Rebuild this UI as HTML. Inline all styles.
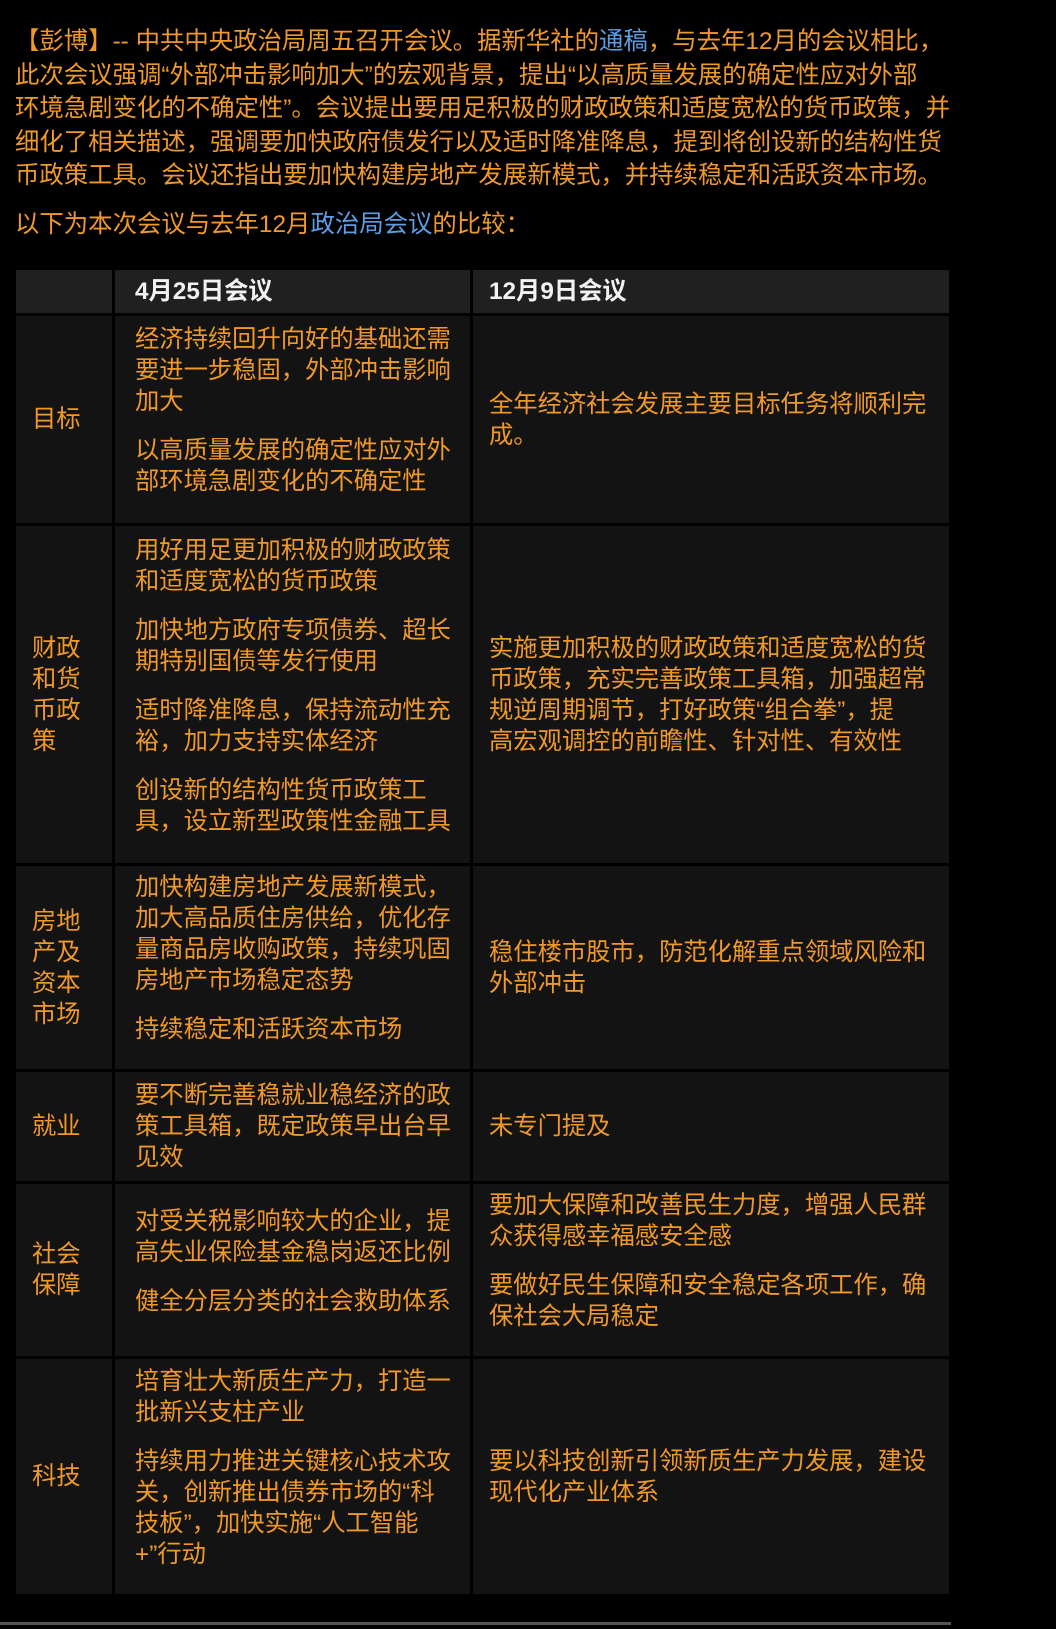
<!DOCTYPE html>
<html><head><meta charset="utf-8"><style>
html,body{margin:0;padding:0;background:#000;}
body{width:1056px;height:1629px;overflow:hidden;position:relative;font-family:"Liberation Sans","Noto Sans CJK SC",sans-serif;color:#f0992a;}
.intro{position:absolute;left:15px;top:25px;width:1000px;font-size:24.4px;line-height:33.5px;margin:0;white-space:nowrap;}
.intro2{position:absolute;left:15px;top:208px;font-size:24.4px;line-height:33.5px;margin:0;}
a{color:#5c9de4;text-decoration:none;}
table{position:absolute;left:13px;top:267px;border-collapse:separate;border-spacing:3px;background:#000;}
td,th{background:#131313;vertical-align:middle;font-size:24.3px;line-height:31px;text-align:left;font-weight:normal;white-space:nowrap;}
th{background:#202020;color:#f2f2f2;font-weight:bold;height:43px;padding:0;}
td p{margin:0 0 18px;}
.c1{width:50px;padding:0 30px 0 16px;}
.c2{width:322px;padding:0 13px 0 20px;}
.c3{width:440px;padding:0 20px 0 16px;}
.line{position:absolute;left:0;top:1622px;width:951px;height:3px;background:#555;}
</style></head><body>
<p class="intro">【彭博】-- 中共中央政治局周五召开会议。据新华社的<a>通稿</a>，与去年12月的会议相比，<br>此次会议强调“外部冲击影响加大”的宏观背景，提出“以高质量发展的确定性应对外部<br>环境急剧变化的不确定性”。会议提出要用足积极的财政政策和适度宽松的货币政策，并<br>细化了相关描述，强调要加快政府债发行以及适时降准降息，提到将创设新的结构性货<br>币政策工具。会议还指出要加快构建房地产发展新模式，并持续稳定和活跃资本市场。</p>
<p class="intro2">以下为本次会议与去年12月<a>政治局会议</a>的比较：</p>
<table>
<tr><th class="c1"></th><th class="c2">4月25日会议</th><th class="c3">12月9日会议</th></tr>
<tr style="height:207px"><td class="c1">目标</td><td class="c2"><p>经济持续回升向好的基础还需<br>要进一步稳固，外部冲击影响<br>加大</p><p>以高质量发展的确定性应对外<br>部环境急剧变化的不确定性</p></td><td class="c3">全年经济社会发展主要目标任务将顺利完<br>成。</td></tr>
<tr style="height:337px"><td class="c1">财政<br>和货<br>币政<br>策</td><td class="c2"><p>用好用足更加积极的财政政策<br>和适度宽松的货币政策</p><p>加快地方政府专项债券、超长<br>期特别国债等发行使用</p><p>适时降准降息，保持流动性充<br>裕，加力支持实体经济</p><p>创设新的结构性货币政策工<br>具，设立新型政策性金融工具</p></td><td class="c3">实施更加积极的财政政策和适度宽松的货<br>币政策，充实完善政策工具箱，加强超常<br>规逆周期调节，打好政策“组合拳”，提<br>高宏观调控的前瞻性、针对性、有效性</td></tr>
<tr style="height:203px"><td class="c1">房地<br>产及<br>资本<br>市场</td><td class="c2"><p>加快构建房地产发展新模式，<br>加大高品质住房供给，优化存<br>量商品房收购政策，持续巩固<br>房地产市场稳定态势</p><p>持续稳定和活跃资本市场</p></td><td class="c3">稳住楼市股市，防范化解重点领域风险和<br>外部冲击</td></tr>
<tr style="height:109px"><td class="c1">就业</td><td class="c2">要不断完善稳就业稳经济的政<br>策工具箱，既定政策早出台早<br>见效</td><td class="c3">未专门提及</td></tr>
<tr style="height:172px"><td class="c1">社会<br>保障</td><td class="c2"><p>对受关税影响较大的企业，提<br>高失业保险基金稳岗返还比例</p><p>健全分层分类的社会救助体系</p></td><td class="c3"><p>要加大保障和改善民生力度，增强人民群<br>众获得感幸福感安全感</p><p>要做好民生保障和安全稳定各项工作，确<br>保社会大局稳定</p></td></tr>
<tr style="height:235px"><td class="c1">科技</td><td class="c2"><p>培育壮大新质生产力，打造一<br>批新兴支柱产业</p><p>持续用力推进关键核心技术攻<br>关，创新推出债券市场的“科<br>技板”，加快实施“人工智能<br>+”行动</p></td><td class="c3">要以科技创新引领新质生产力发展，建设<br>现代化产业体系</td></tr>
</table>
<div class="line"></div>
</body></html>
